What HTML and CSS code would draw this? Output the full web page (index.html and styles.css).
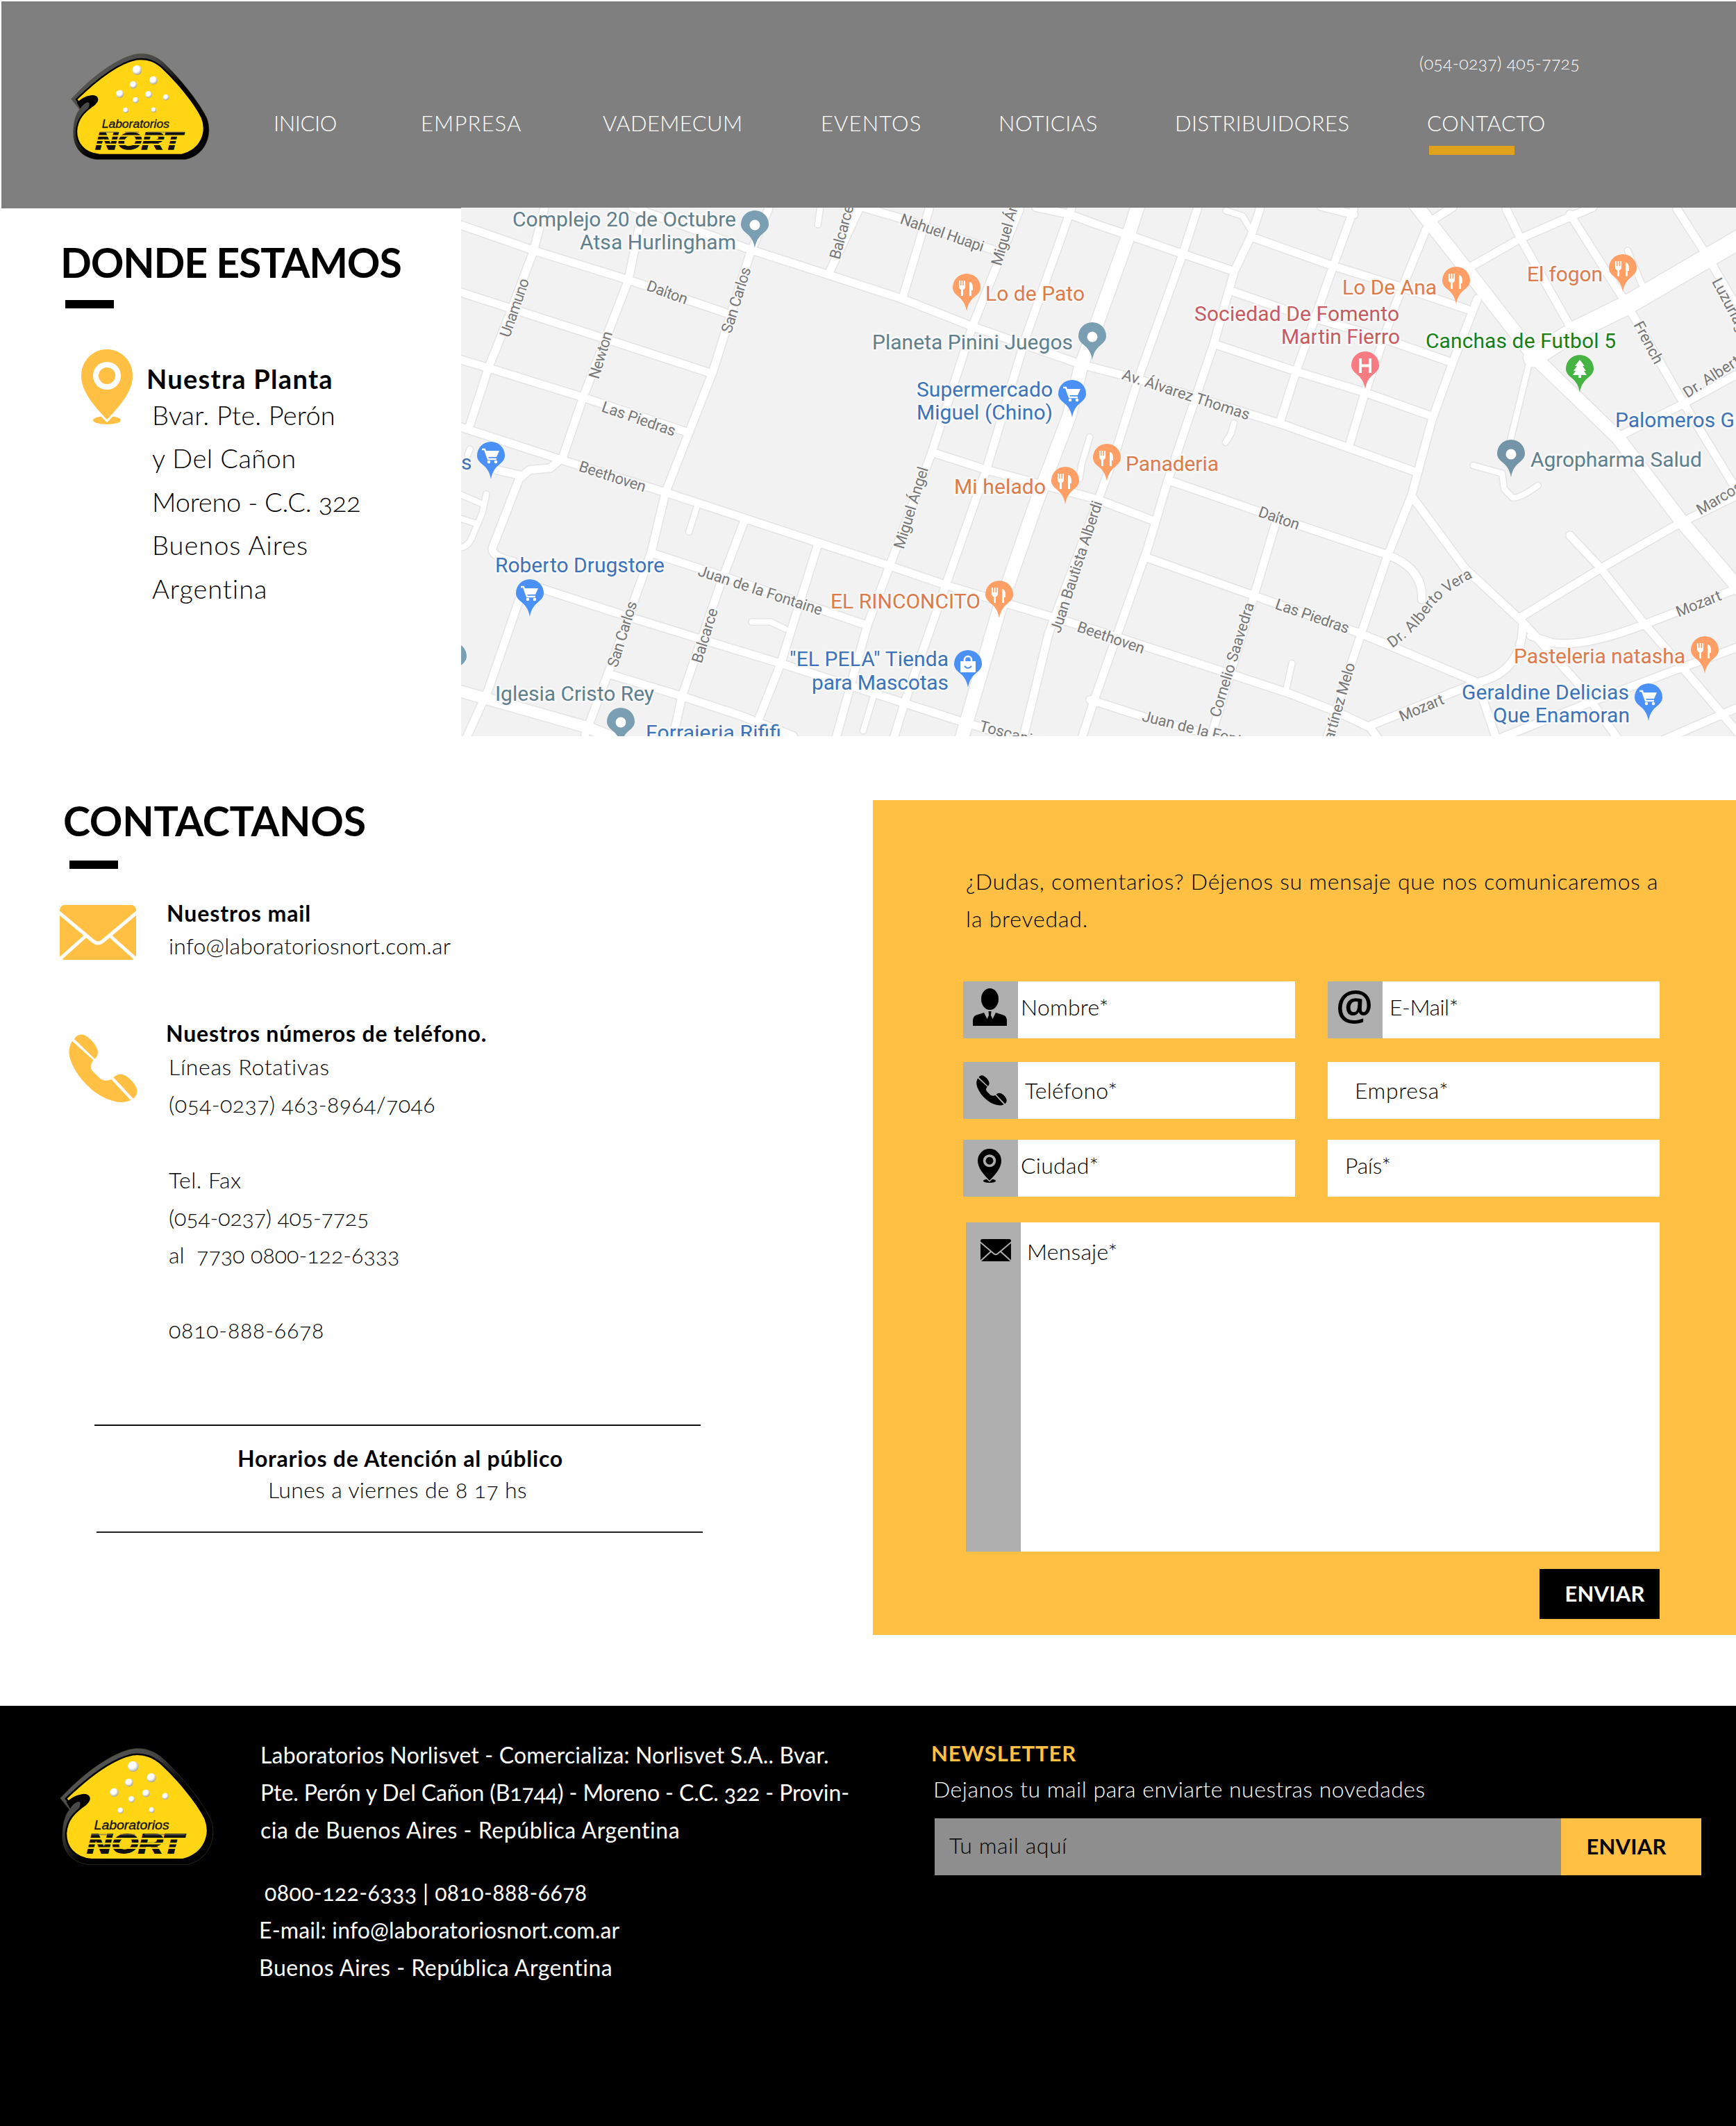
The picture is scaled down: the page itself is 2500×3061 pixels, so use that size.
FILE: index.html
```html
<!DOCTYPE html>
<html lang="es">
<head>
<meta charset="utf-8">
<title>Laboratorios Nort - Contacto</title>
<link rel="stylesheet" href="styles.css">
</head>
<body>
<svg class="defs" width="0" height="0" aria-hidden="true">
  <defs>
    <linearGradient id="rim" x1="0" y1="0" x2="1" y2="1">
      <stop offset="0" stop-color="#666"/><stop offset=".35" stop-color="#444"/><stop offset=".55" stop-color="#000"/>
    </linearGradient>
    <radialGradient id="bubble" cx=".4" cy=".35" r=".65">
      <stop offset=".5" stop-color="#fff"/><stop offset="1" stop-color="#a8a48e"/>
    </radialGradient>
    <symbol id="logo" viewBox="66 50 600 458" preserveAspectRatio="none">
      <path fill="url(#rim)" stroke="#4a4420" stroke-width="1.500" d="M68 246L86 228C150 160 250 80 335 56C385 44 430 55 472 95C530 150 615 250 652 325C682 395 650 490 560 507L180 507C110 500 75 450 77 390C78 340 88 312 104 291Z"/>
      <path fill="#ffd514" stroke="#000" stroke-width="7" d="M90 248C160 180 265 92 350 75C400 70 430 85 460 110C520 165 600 260 632 325C658 390 630 465 545 487L190 487C120 480 90 435 90 385C93 330 125 300 165 272C188 252 185 235 160 233C140 235 122 250 107 268Z"/>
      <path fill="#000" d="M92 262C120 236 145 228 165 232C188 238 185 256 165 274L140 293C146 272 150 262 140 260C128 262 118 270 107 288Z"/>
      <g fill="url(#bubble)">
        <circle cx="352" cy="122" r="21"/><circle cx="423" cy="166" r="18"/><circle cx="336" cy="185" r="16"/>
        <circle cx="278" cy="224" r="17"/><circle cx="402" cy="227" r="15"/><circle cx="477" cy="239" r="13"/>
        <circle cx="346" cy="251" r="13"/><circle cx="303" cy="295" r="12"/><circle cx="424" cy="293" r="11"/>
      </g>
      <text class="logo-small" x="200" y="370" textLength="292" lengthAdjust="spacingAndGlyphs">Laboratorios</text>
      <text class="logo-big" x="172" y="463" textLength="374" lengthAdjust="spacingAndGlyphs">NORT</text>
      <path class="shine" d="M190 389H270M300 389H360M396 389H555"/>
      <path class="stripes" d="M160 405H570M160 424H570M160 442H570"/>
    </symbol>
    <symbol id="i-pin" viewBox="0 0 74 108" preserveAspectRatio="none">
      <ellipse cx="37" cy="102" rx="20" ry="6"/>
      <path class="gap-stroke" stroke-width="6" d="M20 84L37 101L54 84"/>
      <path d="M37 0C57 0 74 16 74 38C74 60 57 80 37 101C17 80 0 60 0 38C0 16 17 0 37 0Z"/>
      <circle class="gap-fill" cx="37" cy="38" r="20"/><circle cx="37" cy="38" r="12"/>
    </symbol>
    <symbol id="i-phone" viewBox="0 0 100 100" preserveAspectRatio="none">
      <path d="M5 10C0 18-1 28 3 39C14 67 40 92 68 98C77 100 84 99 90 96L62 66C57 68 50 68 46 65L35 54C31 50 31 44 36 38Z"/>
      <path d="M8 7C12 1 18-1 24 2C33 7 40 16 42 24C43 29 41 33 38 36Z"/>
      <path d="M65 63C70 58 76 57 82 60C90 64 98 74 99 80C100 86 98 90 94 94Z"/>
    </symbol>
    <symbol id="i-mail" viewBox="0 0 110 79" preserveAspectRatio="none">
      <rect width="110" height="79" rx="7"/>
      <path class="gap-line" d="M-2 10L48 52Q55 58 62 52L112 10M38 44L0 78M72 44L110 78"/>
    </symbol>
    <symbol id="i-person" viewBox="0 0 49 54" preserveAspectRatio="none">
      <ellipse cx="24.5" cy="15.5" rx="12.5" ry="15.5"/>
      <path d="M0 54V47Q0 40 5 38.500L16 35L20.500 44L23 39L22.500 33H26.500L26 39L28.500 44L33 35L44 38.500Q49 40 49 47V54Z"/>
    </symbol>
    <path id="drop" d="M0 0C-2-12-7-17-13-22C-18-26-20-30-20-34A20 20 0 0 1 20-34C20-30 18-26 13-22C7-17 2-12 0 0Z"/>
    <g id="m-dot"><use href="#drop"/><circle cy="-33" r="7.500" fill="#fff"/></g>
    <g id="m-food"><use href="#drop"/><path fill="#fff" d="M-11-44h2v7h1.500v-7h2v7h1.500v-7h2v9q0 3-3 4v9h-3v-9q-3-1-3-4zM4-22v-20q5 0 5 9v3h-2v8z"/></g>
    <g id="m-cart"><use href="#drop"/><path fill="none" stroke="#fff" stroke-width="2.500" d="M-13-43h4l5 14h12"/><path fill="#fff" d="M-8-41h20l-4 9h-13z"/><circle cx="-3" cy="-25" r="2.300" fill="#fff"/><circle cx="7" cy="-25" r="2.300" fill="#fff"/></g>
    <g id="m-bag"><use href="#drop"/><path fill="#fff" d="M-11-38h22v16h-22z"/><path fill="none" stroke="#fff" stroke-width="2.500" d="M-5-37v-3a5 5 0 0 1 10 0v3"/><path fill="none" stroke="#4a90f0" stroke-width="2" d="M-5-31q5 6 10 0"/></g>
    <g id="m-tree"><use href="#drop"/><path fill="#fff" d="M0-47l7 9h-3l5 7h-3l4 6h-8v4h-4v-4h-8l4-6h-3l5-7h-3z"/></g>
    <g id="m-hosp"><use href="#drop"/><path fill="none" stroke="#fff" stroke-width="4" d="M-7-44v21M7-44v21M-7-33.500h14"/></g>
  </defs>
</svg>

<header class="header">
  <svg class="brand"><use href="#logo"/></svg>
  <div class="header-main">
    <div class="header-phone"><span class="t-hphone">(054-0237) 405-7725</span></div>
    <nav class="nav">
      <a><span class="t-inicio">INICIO</span></a>
      <a><span class="t-empresa">EMPRESA</span></a>
      <a><span class="t-vade">VADEMECUM</span></a>
      <a><span class="t-eventos">EVENTOS</span></a>
      <a><span class="t-noticias">NOTICIAS</span></a>
      <a><span class="t-distri">DISTRIBUIDORES</span></a>
      <a class="active"><span class="t-contacto">CONTACTO</span></a>
    </nav>
  </div>
</header>

<section class="where">
  <div class="where-info">
    <h2><span class="t-donde">DONDE ESTAMOS</span></h2>
    <div class="rule"></div>
    <div class="plant">
      <svg class="plant-pin"><use href="#i-pin"/></svg>
      <div>
        <h3><span class="t-planta">Nuestra Planta</span></h3>
        <address>
          <p><span class="t-bvar">Bvar. Pte. Perón</span></p>
          <p><span class="t-ydel">y Del Cañon</span></p>
          <p><span class="t-moreno">Moreno - C.C. 322</span></p>
          <p><span class="t-bsas">Buenos Aires</span></p>
          <p><span class="t-arg">Argentina</span></p>
        </address>
      </div>
    </div>
  </div>
  <svg class="map" viewBox="664 298 1836 761" width="1836" height="761">
    <defs>
      <g id="roads">
        <g transform="translate(650 290) scale(.5931 .4975)">
          <path d="M20 65L200 140L430 225L665 320M440 15L720 135L915 210L1095 280L1265 360L1530 470L1660 510L2010 640L2340 780M20 260L385 400L630 495M20 455L90 480L320 565L570 665M20 650L265 745L520 840L890 985L1070 1055L1205 1110L1568 1240L1890 1365L2030 1420L2150 1475L2230 1520L2260 1568M485 1015L640 1075L1010 1225M210 1115L430 1200L620 1270L800 1335L970 1400L1100 1450L1230 1500L1400 1560M380 1365L560 1430L700 1485L830 1545"/>
          <path d="M225 20L200 140L140 330L90 480L45 645M465 20L430 225L320 565L270 740L240 770L190 775L165 800L100 1000Q95 1025 150 1040M110 775L165 790M770 20L725 150L635 490L520 840L485 1015L385 1350L325 1540M165 1150L90 1410L30 1568M712 920L655 1100L560 1430L535 1568M890 990L800 1335L735 1530M990 20L915 210M1160 20L1095 280M1000 15L1100 50L1320 140M1380 20L1265 360L1165 730L1065 1050L1010 1225L930 1568M1505 20L1395 390L1300 770L1200 1110L1100 1450L1070 1568M1420 15L1500 35L1568 65L1655 100L1776 150L1900 200M1170 725L1300 775L1568 860L1700 920M1811 20L1776 150L1671 500L1611 730L1568 870L1450 1250L1385 1568"/>
          <path class="thin" d="M20 845L78 875M85 845L75 900L50 970Q40 1000 20 1000M20 915L60 930M45 715L40 730M595 885L577 955M895 20L890 65M730 1215L775 1215L810 1235M1550 680L1530 760L1525 800M1025 1430L1000 1530M1900 640L1893 670L1880 695"/>
          <path class="wide" d="M20 1415L330 1520L430 1568"/>
          <path class="main" d="M1670 0L1640 110L1571 340L1530 470L1500 620L1420 870L1330 1180L1230 1590"/>
        </g>
        <g transform="translate(1570 290) scale(.5931 .4975)">
          <path d="M412 20L390 100L350 200L300 410L190 800L140 1000L10 1440L-25 1568M390 100L590 185L740 240L915 310M350 260L470 310L700 390L880 465M300 410L500 490L665 550L830 620M560 12L640 36M640 20L590 185L500 490L460 640M815 80L740 300L665 560L630 700M940 280L880 465L830 630L780 850L720 1030L655 1260L570 1568M820 60L880 15M920 190L1045 105L1170 40L1220 15M1010 20L1045 105L1170 370M1165 35L1300 290L1430 560L1568 830M1425 20L1500 160L1568 300M1280 680L1430 590L1568 500M780 850L910 1060L1050 1215L1190 1400L1290 1568M190 805L420 900L720 1020Q810 1060 805 1150M140 1030L400 1140L660 1250L940 1390M450 930L395 1150L290 1560M0 1440L130 1490L380 1568M680 1515L940 1390Q1050 1360 1050 1220M1040 1205L1240 1060L1430 930L1568 850M1165 965L1240 1060L1345 1220L1440 1350L1580 1545M1070 1255L1120 1275Q1200 1290 1350 1220L1568 1120M1580 1285L1430 1350L1230 1440L960 1568M940 1390L985 1550M1568 1465L1370 1568"/>
          <path class="thin" d="M330 25L370 40L392 85M1305 140L1340 240M1065 470L1020 690M930 762L1000 785L1005 830L1025 855Q1040 860 1087 820M490 1335L475 1415"/>
          <path class="main" d="M785 0L930 220L1080 450L1280 680L1440 930L1580 1125"/>
          <path class="avenue" d="M1075 450L1180 370L1300 300L1580 105"/>
        </g>
      </g>
      <path id="vera" d="M2000 926Q2036 900 2054 872Q2072 846 2120 822"/>
    </defs>
    <rect x="664" y="298" width="1836" height="761" fill="#f2f2f3"/>
    <use href="#roads" class="casing"/>
    <use href="#roads" class="roads"/>
    <g class="street">
      <text transform="translate(741 442) rotate(-71)" textLength="88">Unamuno</text>
      <text transform="translate(865 510) rotate(-73)" textLength="70">Newton</text>
      <text transform="translate(1060 431) rotate(-73)" textLength="98">San Carlos</text>
      <text transform="translate(961 420) rotate(20)" textLength="61">Dalton</text>
      <text transform="translate(920 602) rotate(19)" textLength="111">Las Piedras</text>
      <text transform="translate(882 685) rotate(18)" textLength="100">Beethoven</text>
      <text transform="translate(1212 333) rotate(-75)" textLength="80">Balcarce</text>
      <text transform="translate(1357 334) rotate(19)" textLength="126">Nahuel Huapi</text>
      <text transform="translate(1451 323) rotate(-74)" textLength="120">Miguel Ángel</text>
      <text transform="translate(1312 730) rotate(-73)" textLength="122">Miguel Ángel</text>
      <text transform="translate(1095 849) rotate(18)" textLength="187">Juan de la Fontaine</text>
      <text transform="translate(896 912) rotate(-73)" textLength="98">San Carlos</text>
      <text transform="translate(1015 914) rotate(-73)" textLength="81">Balcarce</text>
      <text transform="translate(1550 815) rotate(-72)" textLength="198">Juan Bautista Alberdi</text>
      <text transform="translate(1600 917) rotate(19)" textLength="101">Beethoven</text>
      <text transform="translate(1457 1056) rotate(15)" textLength="95">Toscanini</text>
      <text transform="translate(1708 567) rotate(18)" textLength="192">Av. Álvarez Thomas</text>
      <text transform="translate(1842 745) rotate(19)" textLength="61">Dalton</text>
      <text transform="translate(1890 886) rotate(19)" textLength="111">Las Piedras</text>
      <text transform="translate(1774 949) rotate(-73)" textLength="171">Cornelio Saavedra</text>
      <text transform="translate(1926 1018) rotate(-74)" textLength="134">Martínez Melo</text>
      <text class="along"><textPath href="#vera" textLength="158">Dr. Alberto Vera</textPath></text>
      <text transform="translate(2047 1018) rotate(-23)" textLength="68">Mozart</text>
      <text transform="translate(1736 1052) rotate(14)" textLength="187">Juan de la Fontaine</text>
      <text transform="translate(2446 868) rotate(-22)" textLength="68">Mozart</text>
      <text transform="translate(2504 699) rotate(-31)" textLength="138">Marcos Sastre</text>
      <text transform="translate(2491 524) rotate(-33)" textLength="155">Dr. Alberto Vera</text>
      <text transform="translate(2374 492) rotate(62)" textLength="66">French</text>
      <text transform="translate(2494 443) rotate(62)" textLength="96">Luzuriaga</text>
    </g>
    <g class="poi">
      <g class="slate">
        <text x="738" y="325" textLength="322">Complejo 20 de Octubre</text><text x="835" y="358" textLength="225">Atsa Hurlingham</text>
        <text x="1256" y="502" textLength="289">Planeta Pinini Juegos</text><text x="713" y="1008" textLength="229">Iglesia Cristo Rey</text>
        <text x="2204" y="671" textLength="247">Agropharma Salud</text>
      </g>
      <g class="orange">
        <text x="1419" y="432" textLength="143">Lo de Pato</text><text x="1621" y="677" textLength="134">Panaderia</text><text x="1374" y="710" textLength="132">Mi helado</text>
        <text x="1196" y="875" textLength="216">EL RINCONCITO</text><text x="1933" y="423" textLength="136">Lo De Ana</text><text x="2199" y="404" textLength="109">El fogon</text>
        <text x="2180" y="954" textLength="247">Pasteleria natasha</text>
      </g>
      <g class="blue">
        <text x="1320" y="570" textLength="196">Supermercado</text><text x="1320" y="603" textLength="196">Miguel (Chino)</text><text x="664" y="675">s</text>
        <text x="713" y="823" textLength="244">Roberto Drugstore</text><text x="1137" y="958" textLength="229">"EL PELA" Tienda</text><text x="1169" y="992" textLength="197">para Mascotas</text>
        <text x="930" y="1064" textLength="195">Forrajeria Rififi</text><text x="2326" y="614" textLength="172">Palomeros G</text>
        <text x="2105" y="1006" textLength="241">Geraldine Delicias</text><text x="2150" y="1039" textLength="197">Que Enamoran</text>
      </g>
      <g class="red"><text x="1720" y="461" textLength="295">Sociedad De Fomento</text><text x="1845" y="494" textLength="171">Martin Fierro</text></g>
      <g class="green"><text x="2053" y="500" textLength="274">Canchas de Futbol 5</text></g>
    </g>
    <g fill="#7b9fb2"><use href="#m-dot" x="1087" y="356"/><use href="#m-dot" x="1573" y="517"/><use href="#m-dot" x="894" y="1072"/><use href="#m-dot" x="652" y="978"/></g>
    <use href="#m-dot" x="2176" y="686" fill="#7495a8"/>
    <g fill="#ff9f66"><use href="#m-food" x="1392" y="447"/><use href="#m-food" x="1594" y="692"/><use href="#m-food" x="1534" y="725"/><use href="#m-food" x="1439" y="889"/><use href="#m-food" x="2097" y="437"/><use href="#m-food" x="2337" y="419"/><use href="#m-food" x="2455" y="969"/></g>
    <g fill="#4a90f5"><use href="#m-cart" x="1544" y="600"/><use href="#m-cart" x="707" y="689"/><use href="#m-cart" x="763" y="887"/><use href="#m-cart" x="2374" y="1037"/><use href="#m-bag" x="1394" y="989"/></g>
    <use href="#m-hosp" x="1966" y="559" fill="#f77b80"/>
    <use href="#m-tree" x="2275" y="564" fill="#45b443"/>
  </svg>
</section>

<section class="contact">
  <div class="contact-info">
    <h2><span class="t-contactanos">CONTACTANOS</span></h2>
    <div class="rule"></div>
    <div class="row-mail">
      <svg class="icon-mail"><use href="#i-mail"/></svg>
      <div>
        <h4><span class="t-nmail">Nuestros mail</span></h4>
        <p><span class="t-info">info@laboratoriosnort.com.ar</span></p>
      </div>
    </div>
    <div class="row-phone">
      <svg class="icon-phone"><use href="#i-phone"/></svg>
      <div>
        <h4><span class="t-nnum">Nuestros números de teléfono.</span></h4>
        <p><span class="t-lineas">Líneas Rotativas</span></p>
        <p><span class="t-463">(054-0237) 463-8964/7046</span></p>
        <p class="spaced"><span class="t-fax">Tel. Fax</span></p>
        <p><span class="t-405">(054-0237) 405-7725</span></p>
        <p><span class="t-al">al&nbsp; 7730 0800-122-6333</span></p>
        <p class="spaced"><span class="t-0810">0810-888-6678</span></p>
      </div>
    </div>
    <div class="hours">
      <h4><span class="t-horarios">Horarios de Atención al público</span></h4>
      <p><span class="t-lunes">Lunes a viernes de 8 17 hs</span></p>
    </div>
    <div class="hours-end"></div>
  </div>
  <form class="panel">
    <p class="intro"><span class="t-dudas">¿Dudas, comentarios? Déjenos su mensaje que nos comunicaremos a</span><br><span class="t-brev">la brevedad.</span></p>
    <div class="fields">
      <label class="field"><i><svg class="f-person"><use href="#i-person"/></svg></i><span class="t-nombre">Nombre*</span></label>
      <label class="field wide-pad"><i class="at">@</i><span class="t-email">E-Mail*</span></label>
      <label class="field low pad-b"><i><svg class="f-phone"><use href="#i-phone"/></svg></i><span class="t-tel">Teléfono*</span></label>
      <label class="field low pad-c"><span class="t-empr">Empresa*</span></label>
      <label class="field"><i><svg class="f-pin"><use href="#i-pin"/></svg></i><span class="t-ciudad">Ciudad*</span></label>
      <label class="field pad-d"><span class="t-pais">País*</span></label>
    </div>
    <label class="field message"><i><svg class="f-mail"><use href="#i-mail"/></svg></i><span class="t-mensaje">Mensaje*</span></label>
    <button type="button" class="send">ENVIAR</button>
  </form>
</section>

<footer class="footer">
  <svg class="footer-logo"><use href="#logo"/></svg>
  <div class="footer-text">
    <p><span class="t-f1">Laboratorios Norlisvet - Comercializa: Norlisvet S.A.. Bvar.</span></p>
    <p><span class="t-f2">Pte. Perón y Del Cañon (B1744) - Moreno - C.C. 322 - Provin-</span></p>
    <p><span class="t-f3">cia de Buenos Aires - República Argentina</span></p>
    <div class="footer-contact">
      <p class="f-phones"><span class="t-f4">0800-122-6333 | 0810-888-6678</span></p>
      <p><span class="t-f5">E-mail: info@laboratoriosnort.com.ar</span></p>
      <p><span class="t-f6">Buenos Aires - República Argentina</span></p>
    </div>
  </div>
  <div class="newsletter">
    <h4><span class="t-news">NEWSLETTER</span></h4>
    <p><span class="t-dej">Dejanos tu mail para enviarte nuestras novedades</span></p>
    <div class="subscribe">
      <div class="sub-input"><span class="t-tu">Tu mail aquí</span></div>
      <button type="button">ENVIAR</button>
    </div>
  </div>
</footer>
</body>
</html>
```
FILE: styles.css
```css
* { box-sizing: border-box; }
body { margin: 0; width: 2500px; background: #fff; color: #000; font: 300 32px/54px Lato, "Open Sans", sans-serif; font-variant-numeric: oldstyle-nums; }
h2, h3, h4, p, address { margin: 0; font-style: normal; }
h2, h3, h4 { font-weight: 700; }
span { white-space: pre; }
svg { display: block; flex: none; }
.defs { position: absolute; }
.logo-small { font: italic 50px "Liberation Sans", sans-serif; fill: #111; stroke: #111; stroke-width: 1px; }
.logo-big { font: italic bold 106px "Liberation Sans", sans-serif; fill: #111; stroke: #111; stroke-width: 5px; }
.stripes { fill: none; stroke: #ffd514; stroke-width: 7px; }
.shine { fill: none; stroke: #77705a; stroke-width: 5px; stroke-opacity: .7; }
.gap-stroke { fill: none; stroke: var(--gap, #fff); }
.gap-fill { fill: var(--gap, #fff); }
.gap-line { fill: none; stroke: var(--gap, #fff); stroke-width: 5; }

.header { display: flex; height: 298px; margin: 2px 0 0 2px; padding-left: 100px; background: #7f7f7f; color: #fff; }
.brand { width: 200px; height: 153px; margin-top: 75px; }
.header-main { margin-left: 92px; padding-top: 68px; }
.header-phone { padding-left: 1650px; font-size: 25px; line-height: 40px; }
.nav { display: grid; grid-template-columns: 212px 262px 314px 256px 254px 363px auto; margin-top: 47px; font-size: 31px; line-height: 40px; }
.active::after { content: ""; display: block; width: 123px; height: 13px; margin: 13px 0 0 3px; background: #dfa21a; }

.where { display: flex; height: 760px; }
.where-info { width: 664px; padding: 48px 0 0 87px; }
h2 { font-size: 59px; line-height: 60px; }
.rule { width: 70px; height: 12px; margin: 24px 0 0 7px; background: #000; }
.plant { display: flex; gap: 20px; margin: 59px 0 0 30px; }
.plant-pin { width: 74px; height: 108px; fill: #ffc044; }
h3 { margin-top: 21px; font-size: 38px; line-height: 43px; }
address { margin-top: -1px; padding-left: 8px; font-size: 38px; line-height: 62.4px; }

.map { margin-top: -1px; font-family: Roboto, sans-serif; font-weight: 400; font-variant-numeric: normal; }
.map path { vector-effect: non-scaling-stroke; }
.roads, .casing { fill: none; stroke-linejoin: round; stroke-linecap: round; }
.roads { --w: 0px; stroke: #fff; }
.casing { --w: 3px; stroke: #e4e4e5; }
#roads path { stroke-width: calc(11px + var(--w)); }
#roads .thin { stroke-width: calc(8px + var(--w)); }
#roads .wide { stroke-width: calc(16px + var(--w)); }
#roads .main { stroke-width: calc(19px + var(--w)); }
#roads .avenue { stroke-width: calc(27px + var(--w)); }
.street text { font-size: 22px; text-anchor: middle; dominant-baseline: central; fill: #777; stroke: #f6f6f6; stroke-width: 4px; paint-order: stroke; }
.street .along { text-anchor: start; }
.poi text { font-size: 30px; stroke: #f8f8f8; stroke-width: 5px; paint-order: stroke; }
.slate { fill: #5f7f8c; }
.orange { fill: #dc7b4b; }
.blue { fill: #3d73b9; }
.red { fill: #c65b60; }
.green { fill: #178017; }

.contact { display: flex; height: 1396px; }
.contact-info { width: 1257px; padding-top: 92px; }
.contact-info h2 { padding-left: 91px; }
.contact-info .rule { margin: 27px 0 0 100px; }
h4 { line-height: 42px; }
.row-mail { display: flex; gap: 44px; margin: 43px 0 0 86px; }
.row-mail p { padding-left: 3px; line-height: 52px; }
.icon-mail { width: 110px; height: 79px; margin-top: 9px; fill: #ffc044; }
.row-phone { display: flex; gap: 41px; margin: 79px 0 0 99px; }
.row-phone p { padding-left: 4px; line-height: 54.2px; }
.row-phone .spaced { margin-top: 54.2px; }
.icon-phone { width: 99px; height: 99px; margin-top: 22px; fill: #ffc044; }
.hours { width: 873px; margin: 108px 0 0 136px; padding-top: 24px; border-top: 2px solid #111; text-align: center; }
.hours h4, .hours p { line-height: 45px; }
.hours h4 { padding-left: 8px; }
.hours-end { width: 873px; height: 2px; margin: 38px 0 0 139px; background: #222; }

.panel { width: 1243px; height: 1202px; margin-top: 92px; padding: 90px 110px 0 130px; background: #ffc044; }
.intro { padding-left: 4px; white-space: nowrap; }
.fields { display: grid; grid-template-columns: 478px 478px; grid-template-rows: 82px 82px 82px; column-gap: 47px; row-gap: 32px; margin-top: 63px; }
.field { display: flex; height: 82px; background: #fff; line-height: 74px; }
.field i { display: flex; justify-content: center; width: 79px; margin-right: 4px; background: #afafaf; --gap: #afafaf; }
.field.low { margin-top: 2px; line-height: 82px; }
.pad-b i { margin-right: 10px; }
.pad-c { padding-left: 39px; }
.pad-d { padding-left: 25px; }
.wide-pad i { margin-right: 10px; }
.field .at { padding-right: 2px; font: 600 59px/66px "Noto Sans", sans-serif; }
.f-person { width: 49px; height: 54px; margin: 10px 0 0 -2px; }
.f-phone { width: 44px; height: 44px; margin: 19px 0 0 3px; }
.f-pin { width: 34px; height: 49px; margin: 13px 0 0 -4px; }
.f-mail { width: 44px; height: 32px; margin: 24px 0 0 7px; }
.message { height: 474px; margin: 37px 0 0 4px; line-height: 84px; }
.message i { margin-right: 9px; }
button { border: 0; padding: 0; font: 700 31px Lato, sans-serif; letter-spacing: .2px; }
.send { display: block; width: 173px; height: 72px; margin: 25px 0 0 auto; padding: 0 0 3px 15px; background: #000; color: #fff; }

.footer { display: flex; height: 605px; padding-left: 86px; background: #000; color: #fff; }
.footer-logo { width: 222px; height: 168px; margin-top: 61px; }
.footer-text { width: 1033px; padding: 44px 0 0 67px; font-weight: 400; }
.footer-contact { margin: 36px 0 0 -2px; }
.f-phones { padding-left: 8px; }
.newsletter { padding-top: 48px; }
.newsletter h4 { font-size: 31px; line-height: 40px; color: #ffc044; }
.newsletter p { padding-left: 3px; line-height: 64px; }
.subscribe { display: flex; height: 82px; margin: 10px 0 0 5px; }
.sub-input { width: 902px; padding-left: 21px; background: #8e8e8e; color: #000; line-height: 78px; }
.subscribe button { width: 202px; padding: 0 14px 3px 0; background: #ffc044; }

/* optical tracking per line */
.t-hphone { letter-spacing: .2px; }
.t-inicio { letter-spacing: -.38px; }
.t-empresa, .t-eventos { letter-spacing: 1.13px; }
.t-vade { letter-spacing: .41px; }
.t-noticias { letter-spacing: .52px; }
.t-distri { letter-spacing: .49px; }
.t-contacto { letter-spacing: .56px; }
.t-donde { letter-spacing: -1.14px; }
.t-contactanos { letter-spacing: -.29px; }
.t-planta { letter-spacing: 1.3px; }
.t-bvar { letter-spacing: .2px; }
.t-ydel { letter-spacing: .45px; }
.t-moreno { letter-spacing: -.22px; }
.t-bsas { letter-spacing: 1px; }
.t-arg { letter-spacing: .95px; }
.t-nmail { letter-spacing: .92px; }
.t-info { letter-spacing: .22px; }
.t-nnum { letter-spacing: .8px; }
.t-lineas { letter-spacing: .7px; }
.t-463 { letter-spacing: .42px; }
.t-fax { letter-spacing: .5px; }
.t-405 { letter-spacing: -.14px; }
.t-al { letter-spacing: .04px; }
.t-0810 { letter-spacing: .8px; }
.t-horarios { letter-spacing: .79px; }
.t-lunes { letter-spacing: .36px; }
.t-dudas { letter-spacing: .75px; }
.t-brev { letter-spacing: .81px; }
.t-nombre, .t-tel, .t-ciudad, .t-mensaje { letter-spacing: .24px; }
.t-email { letter-spacing: -.49px; }
.t-empr { letter-spacing: .6px; }
.t-pais { letter-spacing: -.29px; }
.t-f1, .t-f5 { letter-spacing: .16px; }
.t-f2 { letter-spacing: -.11px; }
.t-f3 { letter-spacing: .56px; }
.t-f4 { letter-spacing: .43px; }
.t-f6 { letter-spacing: .53px; }
.t-news { letter-spacing: .92px; }
.t-dej { letter-spacing: .5px; }
.t-tu { letter-spacing: .57px; }
```
